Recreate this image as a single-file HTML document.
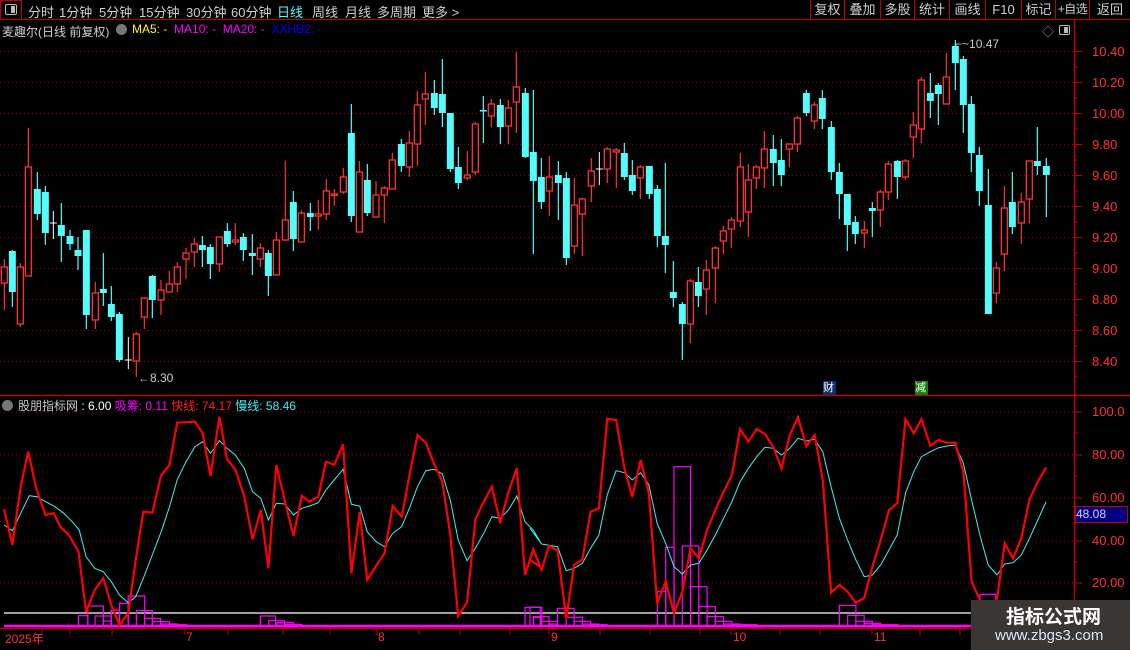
<!DOCTYPE html>
<html><head><meta charset="utf-8"><style>
*{margin:0;padding:0;box-sizing:border-box}
body{width:1130px;height:650px;background:#000;overflow:hidden;position:relative;font-family:"Liberation Sans","Noto Sans CJK SC",sans-serif;font-size:12px;color:#c8c8c8}
.t{position:absolute;white-space:nowrap}
#top{position:absolute;left:0;top:0;width:1130px;height:20px;border-bottom:1px solid #c00000}
#top span{position:absolute;top:2px;font-size:13px;color:#d0d0d0;white-space:nowrap}
.btn{position:absolute;top:0;height:20px;border-left:1px solid #c00000;font-size:13px;color:#d0d0d0;text-align:center;line-height:19px;white-space:nowrap;overflow:hidden}
svg{position:absolute;left:0;top:0}
</style></head><body>
<div id="top">
<div style="position:absolute;left:0;top:0;width:22px;height:20px;border:1px solid #c00000"></div>
<div style="position:absolute;left:5px;top:4px;width:12px;height:11px;border:1px solid #bbb;border-radius:2px"><div style="position:absolute;right:1px;top:1px;width:4px;height:7px;background:#bbb"></div></div>
<span style="left:28px">分时</span><span style="left:59px">1分钟</span><span style="left:99px">5分钟</span><span style="left:139px">15分钟</span><span style="left:186px">30分钟</span><span style="left:231px">60分钟</span><span style="left:277px;color:#54fcfc">日线</span><span style="left:312px">周线</span><span style="left:345px">月线</span><span style="left:377px">多周期</span><span style="left:422px">更多 &gt;</span>
<div class="btn" style="left:810px;width:34px">复权</div><div class="btn" style="left:844px;width:36px">叠加</div><div class="btn" style="left:880px;width:34px">多股</div><div class="btn" style="left:914px;width:35px">统计</div><div class="btn" style="left:949px;width:36px">画线</div><div class="btn" style="left:985px;width:36px">F10</div><div class="btn" style="left:1021px;width:34px">标记</div><div class="btn" style="left:1055px;width:34px;font-size:12px;letter-spacing:-0.5px">+自选</div><div class="btn" style="left:1089px;width:41px">返回</div>
</div>
<div class="t" style="left:2px;top:23px;font-size:12px;color:#d0d0d0">麦趣尔(日线 前复权)</div>
<div class="t" style="left:116px;top:24px;width:11px;height:11px;border-radius:50%;background:#777"></div>
<div class="t" style="left:132px;top:22px;font-size:12px"><span style="color:#ffff00">MA5: -</span>&nbsp; <span style="color:#ff00ff">MA10: -</span>&nbsp; <span style="color:#ff00ff">MA20: -</span>&nbsp; <span style="color:#0000ff">XXHB2: -</span></div>
<div class="t" style="left:1042px;top:23px;color:#999;font-size:12px">◇</div>
<div class="t" style="left:1059px;top:25px;width:11px;height:10px;border:1px solid #bbb;border-radius:2px"><div style="position:absolute;right:1px;top:1px;width:4px;height:6px;background:#bbb"></div></div>
<div class="t" style="left:2px;top:400px;width:11px;height:11px;border-radius:50%;background:#777"></div>
<div class="t" style="left:18px;top:397px;font-size:12px"><span style="color:#c8c8c8">股朋指标网</span> <span style="color:#fff">: 6.00</span> <span style="color:#ff00ff">吸筹: 0.11</span> <span style="color:#ff2020">快线: 74.17</span> <span style="color:#40f0f0">慢线: 58.46</span></div>
<svg id="s" width="1130" height="650"></svg>
<div class="t" style="left:138px;top:371px;color:#c8c8c8;font-size:12px">←8.30</div>
<div class="t" style="left:955px;top:37px;color:#c8c8c8;font-size:12px">⌐~10.47</div>
<div class="t" style="left:823px;top:381px;width:13px;height:14px;background:#103070;color:#fff;font-size:11px;line-height:14px">财</div>
<div class="t" style="left:915px;top:381px;width:13px;height:14px;background:#108010;color:#fff;font-size:11px;line-height:14px">减</div>
<div id="ax"></div>
<div class="t" style="left:1075px;top:506px;width:53px;height:17px;background:#000080;border:1px solid #c00000;color:#d0d0ff;font-size:12px;line-height:15px">48.08</div>
<div class="t" style="left:5px;top:630px;color:#ff3232;font-size:12px">2025年</div>
<div class="t" style="left:186px;top:630px;color:#ff3232">7</div>
<div class="t" style="left:378px;top:630px;color:#ff3232">8</div>
<div class="t" style="left:551px;top:630px;color:#ff3232">9</div>
<div class="t" style="left:733px;top:630px;color:#ff3232">10</div>
<div class="t" style="left:874px;top:630px;color:#ff3232">11</div>
<div class="t" style="left:971px;top:600px;width:159px;height:50px;background:#3a3634"></div>
<div class="t" style="left:1006px;top:602px;color:#fff;font-size:19px;font-weight:bold">指标公式网</div>
<div class="t" style="left:995px;top:627px;color:#d8e8ff;font-size:15px">www.zbgs3.com</div>
<script>
var s=document.getElementById('s'),h='';
var K=0.3445;
function L(x1,y1,x2,y2,c,w,d){h+='<line x1="'+x1+'" y1="'+y1+'" x2="'+x2+'" y2="'+y2+'" stroke="'+c+'" stroke-width="'+(w||1)+'"'+(d?' stroke-dasharray="'+d+'"':'')+'/>';}
for(var k=0;k<11;k++){var y=51.5+31*k;L(0,y,1074,y,'#8a0000',1,'1 3');}
[412,455,498,541,583].forEach(function(y){L(0,y,1074,y,'#8a0000',1,'1 3');});
L(1074.5,20,1074.5,650,'#c00000',1.5);
L(0,395.5,1130,395.5,'#c00000',1.5);
L(0,628.5,1074,628.5,'#c00000',1.5);
var ax='',P=['10.40','10.20','10.00','9.80','9.60','9.40','9.20','9.00','8.80','8.60','8.40'];
P.forEach(function(p,k){var y=51.5+31*k;L(1074,y,1082,y,'#c00000');L(1074,y+15.5,1078,y+15.5,'#c00000');ax+='<div class="t" style="left:1092px;top:'+(y-8)+'px;color:#ff3232;font-size:13px">'+p+'</div>';});
[['100.0',412],['80.00',455],['60.00',498],['40.00',541],['20.00',583]].forEach(function(a){L(1074,a[1],1082,a[1],'#c00000');L(1074,a[1]+21,1078,a[1]+21,'#c00000');ax+='<div class="t" style="left:1092px;top:'+(a[1]-8)+'px;color:#ff3232;font-size:13px">'+a[0]+'</div>';});
document.getElementById('ax').innerHTML=ax;
[185,377,549,731,872,42,70,112,228,283,330,419,460,510,600,650,700,780,820,920,960,1020].forEach(function(x){L(x,629,x,635,'#c00000');});
var X=[];[13,37,61,85,112,136,160,184,210,234,259,286,310,334,358,385,409,433,457,483,508,532,558,583,607,631,658,682,706,730,757,781,805,829,856,880,904,931,955,979,1003,1030,1054,1078].forEach(function(z){X.push(z/3);});
[22,48,73,97,124,148,172,196,223,247,271,295,322,346,370,394,421,445,469,496,520,544,568,595,619,643,667,694,718,742,769,793,817,841,868,892,916,940,967,991,1015,1039,1066].forEach(function(z){X.push(360+z/3);});
[25,49,76,100,124,148,175,199,223,247,274,298,322,349,373,397,421,448,472,496,520,547,571,595,619,646,670,694,721,745,769,793,820,844,868,892,919,943,967,994].forEach(function(z){X.push(715+z/3);});
var C=[[267,283,259,310,'r'],[251,292,250,307,'c'],[267,324,263,327,'r'],[167,276,128,276,'r'],[189,214,172,220,'c'],[192,233,186,245,'c'],[223,223,211,239,'w'],[225,236,203,262,'c'],[236,244,230,250,'c'],[250,256,237,270,'c'],[230,315,230,329,'c'],[293,320,282,329,'r'],[289,293,253,306,'c'],[304,317,286,321,'c'],[314,360,312,362,'c'],[360,360,337,369,'w'],[334,361,332,377,'r'],[298,317,297,329,'r'],[276,300,275,318,'c'],[290,300,280,315,'r'],[284,292,271,292,'r'],[267,284,262,292,'r'],[253,259,248,279,'r'],[244,252,238,267,'r'],[245,250,236,267,'c'],[247,264,244,279,'c'],[237,264,237,272,'r'],[231,244,223,247,'c'],[240,242,223,245,'r'],[237,250,233,261,'c'],[253,256,234,275,'c'],[248,259,243,267,'r'],[253,276,250,296,'c'],[240,275,232,275,'r'],[220,240,161,241,'r'],[202,239,191,251,'c'],[213,242,210,242,'r'],[213,217,203,231,'c'],[214,216,200,230,'r'],[191,214,179,220,'r'],[194,195,189,206,'r'],[177,192,168,194,'r'],[133,216,104,222,'c'],[172,232,161,232,'r'],
[180,213,164,216,'c'],[195,217,181,217,'r'],[188,195,186,223,'r'],[160,189,153,189,'r'],[144,166,139,172,'c'],[143,167,131,177,'r'],[105,144,91,166,'r'],[94,99,72,125,'r'],[93,108,80,115,'c'],[94,113,59,127,'c'],[113,169,113,172,'c'],[167,183,147,189,'c'],[175,178,151,180,'r'],[124,172,122,175,'r'],[110,110,96,143,'c'],[104,116,99,127,'r'],[105,127,99,144,'c'],[108,126,100,144,'r'],[87,102,52,133,'r'],[93,157,88,158,'c'],[152,181,90,254,'c'],[177,202,158,209,'c'],[177,191,156,216,'r'],[175,183,161,220,'c'],[178,258,172,265,'c'],[205,246,178,254,'r'],[199,214,198,256,'r'],[171,186,158,202,'r'],[169,169,152,185,'w'],[149,169,147,183,'r'],[150,152,148,188,'r'],[153,177,143,180,'c'],[175,191,160,195,'c'],[167,178,165,199,'r'],[166,194,166,199,'c'],[189,236,185,247,'c'],[236,245,163,273,'c'],[292,298,261,307,'c'],[304,324,302,360,'c'],[281,324,279,343,'r'],[282,296,267,307,'c'],[270,289,260,315,'r'],[248,268,246,303,'r'],
[231,241,226,254,'r'],[220,229,217,248,'r'],[167,221,153,227,'r'],[180,212,164,237,'r'],[167,178,165,189,'r'],[149,168,131,188,'r'],[149,163,135,186,'c'],[160,175,139,186,'c'],[144,149,144,167,'r'],[118,144,116,152,'r'],[93,113,90,116,'c'],[105,121,102,129,'r'],[98,119,90,129,'c'],[127,172,121,180,'c'],[172,194,163,219,'c'],[194,225,194,251,'c'],[222,234,216,244,'c'],[230,233,221,248,'r'],[208,211,202,237,'c'],[192,210,190,227,'r'],[164,192,161,200,'r'],[161,177,160,199,'c'],[161,177,159,180,'r'],[125,137,112,158,'r'],[80,129,77,143,'r'],[93,101,73,118,'c'],[85,94,83,125,'c'],[77,104,53,104,'r'],[46,63,40,90,'c'],[59,105,56,133,'c'],[104,153,96,172,'c'],[155,191,147,206,'c'],[205,314,169,314,'c'],[268,293,262,303,'r'],[208,254,186,271,'r'],[202,227,172,234,'c'],[202,223,193,244,'r'],[161,199,161,223,'r'],[161,166,127,175,'c'],[166,175,158,217,'c']];
C.forEach(function(c,i){var x=X[i];if(x===undefined)return;var col=c[4]=='r'?'#ff3232':c[4]=='c'?'#54fcfc':'#ffffff';
 var t=c[0],b=c[1];
 if(c[4]=='w'){L(x,c[2],x,c[3],col);L(x-3.5,t,x+3.5,t,col);return;}
 L(x,c[2],x,t,col,1.2);L(x,b,x,c[3],col,1.2);
 var hh=Math.max(b-t,1.5);
 if(c[4]=='r')h+='<rect x="'+(x-3)+'" y="'+t+'" width="6" height="'+hh+'" fill="none" stroke="'+col+'" stroke-width="1.3"/>';
 else h+='<rect x="'+(x-3.5)+'" y="'+t+'" width="7" height="'+hh+'" fill="'+col+'"/>';
});
L(4,613,1074,613,'#ffffff',1.2);
function pts(a,ox){var o=[];for(var i=0;i<a.length;i+=2)o.push((ox+a[i]*K).toFixed(1)+','+(400+a[i+1]/3).toFixed(1));return o.join(' ');}
function box(b,ox){h+='<rect x="'+(ox+b[0]*K)+'" y="'+(400+b[2]/3)+'" width="'+((b[1]-b[0])*K)+'" height="'+(626-400-b[2]/3)+'" fill="none" stroke="#ff00ff" stroke-width="1.2"/>';}
var B=[[228,255,647],[255,300,618],[276,323,648],[300,323,663],[323,347,630],[347,372,610],[372,420,588],[396,442,632],[420,466,655],[442,492,665],[466,516,672],[492,542,674],[756,800,648],[780,826,662],[804,852,668],[826,876,673],[1524,1568,622],[1548,1568,652]];
B.forEach(function(b){box(b,0);});
var B2=[[0,34,622],[10,55,650],[34,80,664],[58,80,672],[80,128,625],[105,152,652],[128,176,664],[152,200,672],[176,224,674],[370,394,574],[394,418,442],[418,466,200],[442,490,438],[466,514,560],[490,538,620],[514,562,650],[538,586,664],[562,610,672],[586,658,674],[898,946,616],[922,970,646],[946,994,664],[970,1018,670],[994,1068,674],[1306,1352,583]];
B2.forEach(function(b){box(b,530);});
L(4,626,1074,626,'#ff00ff',2.5);
var cy1=[12,375,36,392,60,340,85,287,108,290,132,305,160,320,185,340,210,365,230,390,250,470,275,505,300,515,323,545,347,585,372,608,394,590,416,535,442,465,468,395,492,320,514,240,540,185,566,140,588,125,611,160,637,122,659,145,683,165,709,205,733,275,757,295,779,360,802,310,826,312,852,345,876,325,898,318,924,308,946,270,970,240,996,208,1020,313,1044,318,1066,395,1092,425,1116,440,1140,400,1166,380,1190,320,1212,260,1236,212,1260,208,1284,222,1307,300,1330,420,1356,482,1380,445,1404,400,1428,350,1452,355,1476,330,1500,288,1524,365,1548,390,1568,425];
var cy2=[0,385,34,432,80,440,105,512,128,505,152,490,176,445,200,405,224,285,250,212,274,218,297,240,321,218,345,255,369,370,394,430,418,500,442,522,466,495,490,490,514,450,538,405,562,355,586,305,610,245,634,205,658,170,682,142,706,145,730,165,754,145,778,115,802,123,826,118,850,155,874,260,898,355,922,420,946,480,970,530,994,525,1018,495,1042,450,1066,405,1090,280,1114,215,1136,170,1162,155,1186,143,1210,138,1234,135,1258,190,1282,300,1306,405,1330,495,1356,525,1378,492,1402,488,1426,465,1450,415,1474,360,1498,305];
var r1=[12,328,36,435,60,260,82,155,105,265,132,345,156,340,175,380,200,405,228,455,250,635,275,570,300,535,323,615,347,675,372,640,394,480,416,335,442,338,468,225,492,195,514,68,566,65,588,100,611,228,637,50,659,178,683,208,709,290,733,418,757,330,779,505,802,195,826,300,852,408,876,287,898,305,924,290,946,185,970,195,996,133,1020,520,1044,335,1066,540,1092,497,1116,460,1140,318,1166,350,1190,218,1212,105,1236,128,1260,192,1284,245,1307,405,1330,648,1356,607,1380,358,1404,305,1428,260,1452,370,1476,275,1500,205,1524,525,1548,448,1568,500];
var r2=[0,480,10,450,34,510,55,437,80,452,105,655,128,495,152,478,176,335,200,325,224,57,250,60,274,205,297,290,321,180,345,280,369,610,394,545,418,640,442,575,466,445,490,475,514,390,538,330,562,275,586,225,610,87,634,125,658,87,682,102,706,140,730,205,754,105,778,52,802,138,826,105,850,240,874,578,898,555,922,575,946,608,970,594,994,500,1018,420,1042,330,1066,310,1090,57,1114,100,1136,57,1162,137,1186,120,1210,128,1234,128,1258,215,1282,545,1306,600,1330,640,1356,595,1378,430,1402,475,1426,415,1450,298,1474,245,1498,202];
h+='<polyline points="'+pts(cy1,0)+' '+pts(cy2,530)+'" fill="none" stroke="#40f0f0" stroke-width="1"/>';
h+='<polyline points="'+pts(r1,0)+' '+pts(r2,530)+'" fill="none" stroke="#ff0000" stroke-width="2.2"/>';
s.innerHTML=h;
</script>
</body></html>
